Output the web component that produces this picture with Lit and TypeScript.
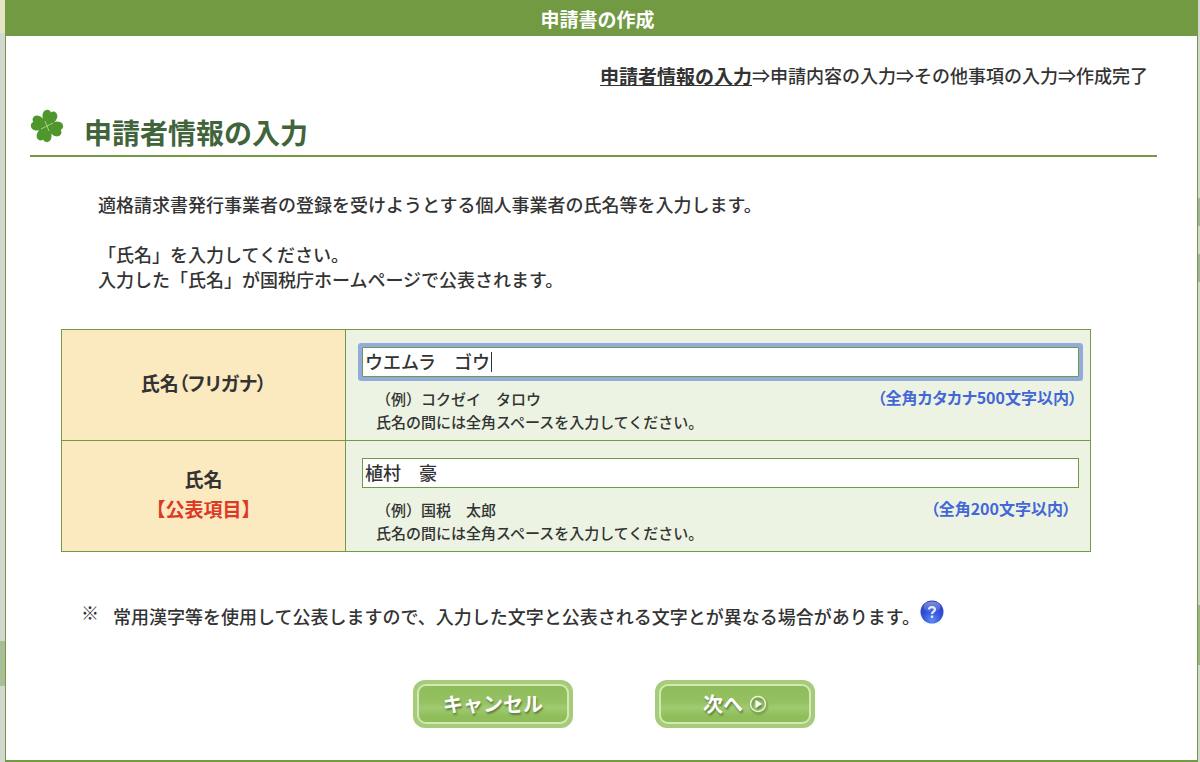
import { LitElement, html, css, svg } from "lit";
import { customElement } from "lit/decorators.js";

const petal = "M0 0C-3-2-6.500-5-6.200-9.500C-5.800-13.300-1.500-14.200 0-11.800C1.500-14.200 5.800-13.300 6.200-9.500C6.500-5 3-2 0 0Z";

const clover = html`<svg class="clover" viewBox="-17 -17 34 34" aria-hidden="true">
  ${[16, 106, 196, 286].map(
    (a) => svg`<path d=${petal} transform="rotate(${a}) scale(1.2)" fill="#4f962d"></path>`
  )}
  <path d="M-6 3L6 -3M-2 -5L2 5" stroke="#a5d184" stroke-width="1" fill="none" />
</svg>`;

const helpIcon = html`<svg viewBox="0 0 24 24" width="24" height="24" aria-hidden="true">
  <defs>
    <radialGradient id="ball" cx="50%" cy="85%" r="85%">
      <stop offset="0" stop-color="#5c8cf4" />
      <stop offset="0.5" stop-color="#3152d8" />
      <stop offset="1" stop-color="#2a3fbd" />
    </radialGradient>
    <linearGradient id="shine" x1="0" y1="0" x2="0" y2="1">
      <stop offset="0" stop-color="#fff" stop-opacity="0.4" />
      <stop offset="1" stop-color="#fff" stop-opacity="0.05" />
    </linearGradient>
  </defs>
  <circle cx="12" cy="12" r="11.500" fill="url(#ball)" />
  <ellipse cx="12" cy="7" rx="8.500" ry="5.500" fill="url(#shine)" />
  <path d="M9 9.500C9 6.500 15 6.300 15 9.500C15 11.600 12 11.600 12 14" stroke="#e8ecff" stroke-width="2.200" fill="none" />
  <rect x="10.800" y="15.500" width="2.400" height="2.300" fill="#e8ecff" />
</svg>`;

const playIcon = html`<svg class="play" viewBox="0 0 18 18" aria-hidden="true">
  <circle cx="9" cy="9" r="7.500" fill="none" stroke="#e9f6da" stroke-width="1.500" />
  <path d="M6.500 4.800L13 9L6.500 13.200Z" fill="#fff" />
</svg>`;

@customElement("app-root")
export class AppRoot extends LitElement {
  static styles = css`
    :host {
      display: block;
      box-sizing: border-box;
      min-height: 100vh;
      padding: 0 2px 0 5px;
      background:
        linear-gradient(#e6e4c4, #e6e4c4) 0 0 / 5px 33px no-repeat,
        linear-gradient(#a9bd97, #a9bd97) 0 641px / 5px 45px no-repeat,
        linear-gradient(#a3b39c, #a3b39c) 100% 198px / 2px 28px no-repeat,
        linear-gradient(#a3b39c, #a3b39c) 100% 254px / 2px 28px no-repeat,
        linear-gradient(#9db488, #9db488) 100% 605px / 2px 60px no-repeat,
        #d3d8d0;
      color: #333;
      font: 500 18px/25px "Noto Sans CJK JP", sans-serif;
    }
    * {
      box-sizing: border-box;
    }
    .dialog {
      background: #fff;
      border: 1px solid #719a42;
      border-top: 0;
      border-bottom-width: 2px;
    }
    .title {
      margin: 0;
      padding: 6px 8px 4px 0;
      background: #719a42;
      color: #fff;
      font-size: 19px;
      line-height: 26px;
      text-align: center;
    }
    .steps {
      display: flex;
      justify-content: flex-end;
      padding: 27px 49px 0 24px;
    }
    .current {
      font-size: 19px;
      font-weight: 700;
      text-decoration: underline;
    }
    .heading {
      display: flex;
      align-items: center;
      gap: 20px;
      margin: 21px 40px 0 24px;
      border-bottom: 2px solid #719a42;
    }
    .clover {
      width: 34px;
      height: 34px;
      margin-bottom: 12px;
    }
    .heading h2 {
      margin: 0;
      color: #41643b;
      font-size: 28px;
      line-height: 46px;
    }
    .intro {
      margin: 35px 40px 0 92px;
    }
    .intro p {
      margin: 0 0 25px;
    }
    .intro p:last-child {
      margin-bottom: 0;
    }
    form {
      margin: 37px 0 0;
    }
    .fields {
      margin: 0 106px 0 55px;
    }
    table {
      width: 100%;
      border-collapse: collapse;
      border: 1px solid #719a42;
      table-layout: fixed;
    }
    th,
    td {
      border: 1px solid #719a42;
      background-clip: padding-box;
    }
    th {
      width: 284px;
      padding: 0 0 4px;
      background-color: #fbe9c0;
      font-size: 19px;
      font-weight: 700;
      line-height: 30px;
      font-feature-settings: "palt";
    }
    .public {
      display: block;
      color: #dc3a26;
      font-feature-settings: normal;
    }
    td {
      padding: 17px 11px 7px 16px;
      background-color: #ecf3e2;
    }
    input {
      display: block;
      width: 100%;
      height: 30px;
      margin: 0;
      padding: 0 2px 2px;
      border: 1px solid #719a42;
      border-radius: 0;
      background: #fff;
      color: #333;
      font: inherit;
      outline: none;
    }
    input:focus {
      box-shadow: 0 0 0 4px #91abdc;
      border-radius: 1px;
      caret-color: transparent;
      background: linear-gradient(#333, #333) 128px center / 1px 20px no-repeat #fff;
    }
    .hints {
      display: flex;
      justify-content: space-between;
      margin-top: 10px;
      padding-left: 14px;
      font-size: 15px;
      line-height: 23px;
    }
    .limit {
      padding-right: 2px;
      color: #4367d9;
      font-size: 16px;
      font-weight: 700;
      line-height: 20px;
      font-feature-settings: "palt";
    }
    .limit.inset {
      padding-right: 8px;
    }
    .note {
      display: flex;
      align-items: flex-start;
      gap: 14px;
      margin: 48px 40px 0 75px;
    }
    .note p {
      margin: 4px 0 0;
    }
    .noteText {
      display: flex;
      align-items: flex-start;
    }
    .help {
      display: block;
      width: 24px;
      height: 24px;
    }
    .help svg {
      display: block;
    }
    .actions {
      display: flex;
      justify-content: center;
      gap: 82px;
      margin: 51px 0 32px 25px;
    }
    button {
      display: flex;
      width: 160px;
      height: 48px;
      padding: 4px;
      border: 0;
      border-radius: 12px;
      background: #a5cb7b;
      color: #fff;
      font: 700 20px/24px "Noto Sans CJK JP", sans-serif;
      text-shadow: 1px 2px 2px #5c7d3a;
    }
    .face {
      display: flex;
      flex: 1;
      align-self: stretch;
      align-items: center;
      justify-content: center;
      gap: 6px;
      border: 2px solid #d0eab2;
      border-radius: 9px;
      background: linear-gradient(#8fbc5a, #95c162 45%, #a0cb71 60%, #8fbd5a 85%);
    }
    .play {
      width: 18px;
      height: 18px;
      filter: drop-shadow(1px 2px 1px #5c7d3a);
    }
  `;

  firstUpdated() {
    this.renderRoot.querySelector<HTMLInputElement>("#kana")?.focus();
  }

  render() {
    return html`
      <main class="dialog">
        <h1 class="title">申請書の作成</h1>
        <div class="steps">
          <span class="current" aria-current="step">申請者情報の入力</span>
          <span>⇒申請内容の入力⇒その他事項の入力⇒作成完了</span>
        </div>
        <div class="heading">${clover}<h2>申請者情報の入力</h2></div>
        <div class="intro">
          <p>適格請求書発行事業者の登録を受けようとする個人事業者の氏名等を入力します。</p>
          <p>「氏名」を入力してください。<br />入力した「氏名」が国税庁ホームページで公表されます。</p>
        </div>
        <form @submit=${(e: Event) => e.preventDefault()}>
          <div class="fields">
            <table>
              <tr>
                <th scope="row"><label for="kana">氏名（フリガナ）</label></th>
                <td>
                  <input id="kana" type="text" maxlength="500" value="ウエムラ　ゴウ" autocomplete="off" />
                  <div class="hints">
                    <span>（例）コクゼイ　タロウ<br />氏名の間には全角スペースを入力してください。</span>
                    <span class="limit">（全角カタカナ500文字以内）</span>
                  </div>
                </td>
              </tr>
              <tr>
                <th scope="row"><label for="name">氏名<span class="public">【公表項目】</span></label></th>
                <td>
                  <input id="name" type="text" maxlength="200" value="植村　豪" autocomplete="off" />
                  <div class="hints">
                    <span>（例）国税　太郎<br />氏名の間には全角スペースを入力してください。</span>
                    <span class="limit inset">（全角200文字以内）</span>
                  </div>
                </td>
              </tr>
            </table>
          </div>
          <div class="note">
            <span>※</span>
            <div class="noteText">
              <p>常用漢字等を使用して公表しますので、入力した文字と公表される文字とが異なる場合があります。</p>
              <a class="help" href="#help" aria-label="ヘルプ">${helpIcon}</a>
            </div>
          </div>
          <div class="actions">
            <button type="button"><span class="face">キャンセル</span></button>
            <button type="submit"><span class="face">次へ${playIcon}</span></button>
          </div>
        </form>
      </main>
    `;
  }
}
